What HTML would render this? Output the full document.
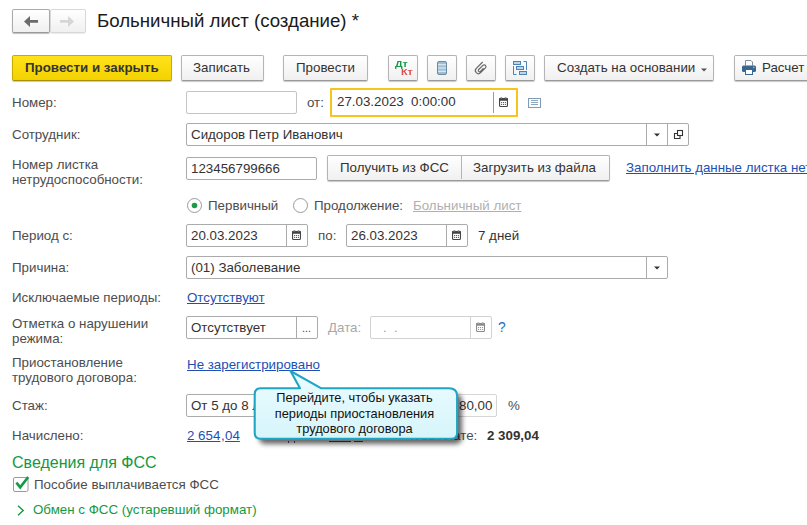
<!DOCTYPE html>
<html><head><meta charset="utf-8">
<style>
*{box-sizing:border-box;margin:0;padding:0}
html,body{width:807px;height:525px;overflow:hidden;background:#fff}
body{position:relative;font-family:"Liberation Sans",sans-serif;font-size:13.33px;line-height:15px;color:#4d4d4d}
div,span{position:absolute;white-space:nowrap}
.btn{border:1px solid #b4b4b4;border-bottom-color:#9a9a9a;border-radius:2px;background:linear-gradient(#ffffff,#f0f0f0);box-shadow:0 1px 1px rgba(0,0,0,.22)}
.bt{color:#333}
.inp{border:1px solid #ababab;border-radius:2px;background:#fff}
.v{color:#333}
.lnk{color:#1d4fb5;text-decoration:underline}
.sep{width:1px;background:#ababab}
svg{position:absolute}
</style></head><body>
<!-- nav -->
<div class="btn" style="left:12px;top:9px;width:38px;height:24px;border-color:#aaa;border-bottom-color:#999;box-shadow:0 1px 1px rgba(0,0,0,.25)"></div>
<div class="btn" style="left:50px;top:9px;width:36px;height:24px;border-color:#d8d8d8;box-shadow:0 1px 1px rgba(0,0,0,.08)"></div>
<svg style="left:24px;top:16px" width="14" height="11" viewBox="0 0 14 11"><path d="M0 5.5 L6 0 V4.1 H14 V6.8 H6 V11 Z" fill="#6b6b6b"/></svg>
<svg style="left:60px;top:16px" width="14" height="11" viewBox="0 0 14 11"><path d="M14 5.5 L8 0 V4.1 H0 V6.8 H8 V11 Z" fill="#d6d6d6"/></svg>
<div style="left:97px;top:13px;font-size:18.67px;color:#1a1a1a">Больничный лист (создание) *</div>

<!-- toolbar -->
<div class="btn" style="left:12px;top:55px;width:160px;height:26px;background:linear-gradient(#ffe21a,#f4d200);border-color:#c9ab00;border-bottom-color:#a88f00"></div>
<div style="left:25px;top:60px;font-weight:bold;color:#333">Провести и закрыть</div>
<div class="btn" style="left:181px;top:55px;width:83px;height:26px"></div>
<div class="bt" style="left:193px;top:60px">Записать</div>
<div class="btn" style="left:283px;top:55px;width:85px;height:26px"></div>
<div class="bt" style="left:296px;top:60px">Провести</div>

<div class="btn" style="left:388px;top:55px;width:30px;height:26px"></div>
<div style="left:395px;top:59px;font-size:9.5px;font-weight:bold;color:#17994a;line-height:10px;transform:scaleX(1.12);transform-origin:0 0">Дт</div>
<div style="left:400.5px;top:67px;font-size:9.5px;font-weight:bold;color:#e04a4e;line-height:10px;transform:scaleX(1.12);transform-origin:0 0">Кт</div>
<div class="btn" style="left:427px;top:55px;width:30px;height:26px"></div>
<svg style="left:437px;top:61px" width="10" height="14" viewBox="0 0 10 14"><rect x="0.5" y="0.5" width="9" height="13" rx="1.5" fill="#9fbed4" stroke="#6a8aa2"/><path d="M1 3.8H9M1 7H9M1 10.2H9" stroke="#eaf3f8" stroke-width="1.1"/></svg>
<div class="btn" style="left:466px;top:55px;width:30px;height:26px"></div>
<svg style="left:472px;top:59px" width="18" height="18" viewBox="-9 -9 18 18"><path transform="rotate(45) scale(0.9)" d="M-3.4 -6 V4 A3.4 3.4 0 0 0 3.4 4 V-3.6 A2 2 0 0 0 -0.6 -3.6 V3 A1.4 1.4 0 0 0 2.2 3 V-1.8" fill="none" stroke="#666" stroke-width="1.3"/></svg>
<div class="btn" style="left:505px;top:55px;width:30px;height:26px"></div>
<svg style="left:512px;top:60px" width="16" height="16" viewBox="0 0 16 16"><g fill="#bcd7ea" stroke="#4b83b5" stroke-width="1"><rect x="1.5" y="1.5" width="7" height="3"/><rect x="4.5" y="6.5" width="7" height="3"/><rect x="7.5" y="11.5" width="7" height="3"/></g><path d="M1.5 6V14.5H4.5M11.5 1.5H14.5V10" fill="none" stroke="#4b83b5"/></svg>

<div class="btn" style="left:544px;top:55px;width:170px;height:26px"></div>
<div class="bt" style="left:557px;top:60px">Создать на основании</div>
<svg style="left:701px;top:68px" width="6" height="4" viewBox="0 0 6 4"><path d="M0 0.5H6L3 3.5Z" fill="#555"/></svg>

<div class="btn" style="left:734px;top:55px;width:90px;height:26px"></div>
<svg style="left:742px;top:60px" width="15" height="15" viewBox="0 0 15 15"><path d="M3.5 5.5V0.5H9L10.5 2V5.5" fill="#fff" stroke="#7d8d9c"/><rect x="0" y="5.5" width="14" height="6.5" rx="1.5" fill="#3a6791"/><rect x="3.5" y="9.5" width="7" height="5" fill="#fff" stroke="#3a6791"/><rect x="11" y="6.8" width="1.5" height="1" fill="#b8c8d8"/></svg>
<div class="bt" style="left:762px;top:60px">Расчет</div>

<!-- Номер -->
<div style="left:12px;top:95px">Номер:</div>
<div class="inp" style="left:186px;top:91px;width:111px;height:23px;border-color:#c4c4c4"></div>
<div style="left:307px;top:95px">от:</div>
<div class="inp" style="left:330px;top:88px;width:188px;height:29px;border:2px solid #f6c51c;border-radius:1px"></div>
<div class="v" style="left:337px;top:94px">27.03.2023&nbsp; 0:00:00</div>
<div class="sep" style="left:493px;top:92px;height:21px;background:#9a9a9a"></div>
<svg style="left:499px;top:97px" width="9" height="10" viewBox="0 0 9 10"><rect x="0.55" y="1.55" width="7.9" height="7.9" rx="1" fill="#fff" stroke="#444" stroke-width="1.1"/><rect x="0" y="1" width="9" height="2.7" rx="0.8" fill="#444"/><circle cx="2.4" cy="1" r="0.7" fill="#fff" stroke="#444" stroke-width="0.6"/><circle cx="6.6" cy="1" r="0.7" fill="#fff" stroke="#444" stroke-width="0.6"/><g fill="#444"><circle cx="2.6" cy="5.6" r="0.62"/><circle cx="4.5" cy="5.6" r="0.62"/><circle cx="6.4" cy="5.6" r="0.62"/><circle cx="2.6" cy="7.5" r="0.62"/><circle cx="4.5" cy="7.5" r="0.62"/><circle cx="6.4" cy="7.5" r="0.62"/></g></svg>
<svg style="left:528px;top:98px" width="13" height="10" viewBox="0 0 13 10"><rect x="0.5" y="0.5" width="12" height="9" fill="#fbfcfd" stroke="#809bb4"/><path d="M3 2.5H10M3 4.5H10M3 6.5H10" stroke="#8ea6bc"/></svg>

<!-- Сотрудник -->
<div style="left:12px;top:127px">Сотрудник:</div>
<div class="inp" style="left:186px;top:123px;width:503px;height:23px"></div>
<div class="sep" style="left:646px;top:124px;height:21px"></div>
<div class="sep" style="left:667px;top:124px;height:21px"></div>
<div class="v" style="left:191px;top:127px">Сидоров Петр Иванович</div>
<svg style="left:654px;top:133px" width="6" height="4" viewBox="0 0 6 4"><path d="M0 0.5H6L3 3.5Z" fill="#333"/></svg>
<svg style="left:673px;top:129px" width="11" height="11" viewBox="0 0 11 11"><path d="M4 4.5H1.5V9.5H7V7" fill="none" stroke="#333" stroke-width="1.1"/><rect x="4.5" y="1.5" width="5" height="5" fill="none" stroke="#333" stroke-width="1.1"/></svg>

<!-- Номер листка -->
<div style="left:12px;top:157px">Номер листка<br>нетрудоспособности:</div>
<div class="inp" style="left:186px;top:157px;width:131px;height:23px"></div>
<div class="v" style="left:191px;top:161px">123456799666</div>
<div class="btn" style="left:327px;top:155px;width:283px;height:26px"></div>
<div class="sep" style="left:461px;top:156px;height:23px;background:#b4b4b4"></div>
<div class="bt" style="left:340px;top:160px">Получить из ФСС</div>
<div class="bt" style="left:473px;top:160px">Загрузить из файла</div>
<div class="lnk" style="left:626px;top:160px">Заполнить данные листка нетрудоспособности</div>

<!-- radio -->
<svg style="left:187px;top:198px" width="15" height="15" viewBox="0 0 15 15"><circle cx="7.5" cy="7.5" r="7" fill="#fff" stroke="#9a9a9a"/><circle cx="7.5" cy="7.5" r="2.8" fill="#1e9a46"/></svg>
<div style="left:208px;top:198px">Первичный</div>
<svg style="left:293px;top:198px" width="15" height="15" viewBox="0 0 15 15"><circle cx="7.5" cy="7.5" r="7" fill="#fff" stroke="#9a9a9a"/></svg>
<div style="left:314px;top:198px">Продолжение:</div>
<div style="left:413px;top:198px;color:#b0b0b0;text-decoration:underline">Больничный лист</div>

<!-- Период -->
<div style="left:12px;top:228px">Период с:</div>
<div class="inp" style="left:186px;top:224px;width:122px;height:23px"></div>
<div class="sep" style="left:286px;top:225px;height:21px"></div>
<div class="v" style="left:191px;top:228px">20.03.2023</div>
<svg style="left:292px;top:230px" width="9" height="10" viewBox="0 0 9 10"><rect x="0.55" y="1.55" width="7.9" height="7.9" rx="1" fill="#fff" stroke="#444" stroke-width="1.1"/><rect x="0" y="1" width="9" height="2.7" rx="0.8" fill="#444"/><circle cx="2.4" cy="1" r="0.7" fill="#fff" stroke="#444" stroke-width="0.6"/><circle cx="6.6" cy="1" r="0.7" fill="#fff" stroke="#444" stroke-width="0.6"/><g fill="#444"><circle cx="2.6" cy="5.6" r="0.62"/><circle cx="4.5" cy="5.6" r="0.62"/><circle cx="6.4" cy="5.6" r="0.62"/><circle cx="2.6" cy="7.5" r="0.62"/><circle cx="4.5" cy="7.5" r="0.62"/><circle cx="6.4" cy="7.5" r="0.62"/></g></svg>
<div style="left:318px;top:228px">по:</div>
<div class="inp" style="left:346px;top:224px;width:122px;height:23px"></div>
<div class="sep" style="left:446px;top:225px;height:21px"></div>
<div class="v" style="left:351px;top:228px">26.03.2023</div>
<svg style="left:452px;top:230px" width="9" height="10" viewBox="0 0 9 10"><rect x="0.55" y="1.55" width="7.9" height="7.9" rx="1" fill="#fff" stroke="#444" stroke-width="1.1"/><rect x="0" y="1" width="9" height="2.7" rx="0.8" fill="#444"/><circle cx="2.4" cy="1" r="0.7" fill="#fff" stroke="#444" stroke-width="0.6"/><circle cx="6.6" cy="1" r="0.7" fill="#fff" stroke="#444" stroke-width="0.6"/><g fill="#444"><circle cx="2.6" cy="5.6" r="0.62"/><circle cx="4.5" cy="5.6" r="0.62"/><circle cx="6.4" cy="5.6" r="0.62"/><circle cx="2.6" cy="7.5" r="0.62"/><circle cx="4.5" cy="7.5" r="0.62"/><circle cx="6.4" cy="7.5" r="0.62"/></g></svg>
<div class="v" style="left:478px;top:228px">7 дней</div>

<!-- Причина -->
<div style="left:12px;top:260px">Причина:</div>
<div class="inp" style="left:186px;top:256px;width:482px;height:23px"></div>
<div class="sep" style="left:646px;top:257px;height:21px"></div>
<div class="v" style="left:191px;top:260px">(01) Заболевание</div>
<svg style="left:654px;top:266px" width="6" height="4" viewBox="0 0 6 4"><path d="M0 0.5H6L3 3.5Z" fill="#333"/></svg>

<!-- Исключаемые -->
<div style="left:12px;top:290px">Исключаемые периоды:</div>
<div class="lnk" style="left:187px;top:290px">Отсутствуют</div>

<!-- Отметка -->
<div style="left:12px;top:316px">Отметка о нарушении<br>режима:</div>
<div class="inp" style="left:186px;top:316px;width:132px;height:23px"></div>
<div class="sep" style="left:296px;top:317px;height:21px"></div>
<div class="v" style="left:191px;top:320px">Отсутствует</div>
<div style="left:302px;top:321px;font-size:11px;color:#444">...</div>
<div style="left:328px;top:320px;color:#a8a8a8">Дата:</div>
<div class="inp" style="left:370px;top:316px;width:122px;height:23px;border-color:#d2d2d2"></div>
<div class="sep" style="left:470px;top:317px;height:21px;background:#d2d2d2"></div>
<div style="left:383px;top:320px;color:#e0906a">.&nbsp;&nbsp;.</div>
<svg style="left:476px;top:322px" width="9" height="10" viewBox="0 0 9 10"><rect x="0.55" y="1.55" width="7.9" height="7.9" rx="1" fill="#fff" stroke="#8a8a8a" stroke-width="1.1"/><rect x="0" y="1" width="9" height="2.7" rx="0.8" fill="#8a8a8a"/><circle cx="2.4" cy="1" r="0.7" fill="#fff" stroke="#8a8a8a" stroke-width="0.6"/><circle cx="6.6" cy="1" r="0.7" fill="#fff" stroke="#8a8a8a" stroke-width="0.6"/><g fill="#8a8a8a"><circle cx="2.6" cy="5.6" r="0.62"/><circle cx="4.5" cy="5.6" r="0.62"/><circle cx="6.4" cy="5.6" r="0.62"/><circle cx="2.6" cy="7.5" r="0.62"/><circle cx="4.5" cy="7.5" r="0.62"/><circle cx="6.4" cy="7.5" r="0.62"/></g></svg>
<div style="left:498px;top:320px;color:#1b6fc0;font-size:13.8px">?</div>

<!-- Приостановление -->
<div style="left:12px;top:355px">Приостановление<br>трудового договора:</div>
<div class="lnk" style="left:187px;top:357px">Не зарегистрировано</div>

<!-- Стаж -->
<div style="left:12px;top:398px">Стаж:</div>
<div class="inp" style="left:186px;top:394px;width:160px;height:23px"></div>
<div class="v" style="left:191px;top:398px">От 5 до 8 лет</div>
<div class="inp" style="left:420px;top:394px;width:77px;height:23px;border-color:#d6d6d6"></div>
<div class="v" style="left:459px;top:398px">80,00</div>
<div style="left:508px;top:398px">%</div>

<!-- Начислено -->
<div style="left:12px;top:428px">Начислено:</div>
<div class="lnk" style="left:187px;top:428px">2 654</div><div class="v" style="left:221px;top:428px;color:#1d4fb5">,</div><div class="lnk" style="left:225px;top:428px">04</div>
<div style="left:288px;top:441px;width:1px;height:2px;background:#6a4a80"></div><div style="left:294px;top:441px;width:1px;height:2px;background:#6a4a80"></div>
<div style="left:329px;top:441px;width:22px;height:1px;background:#1d4fb5"></div><div style="left:354px;top:441px;width:9px;height:1px;background:#1d4fb5"></div>
<div style="left:410px;top:428px">К выплате:</div>
<div class="v" style="left:487px;top:428px;font-weight:bold">2 309,04</div>

<!-- ФСС -->
<div style="left:12px;top:455px;font-size:16px;color:#14993f">Сведения для ФСС</div>
<svg style="left:12px;top:474px" width="18" height="18" viewBox="0 0 18 18"><rect x="1.5" y="3.5" width="14.5" height="14" rx="1.5" fill="#fff" stroke="#9a9a9a"/><path d="M4.4 8.6 L8.2 13.4 L16.2 3" fill="none" stroke="#13994a" stroke-width="2.6" stroke-linecap="butt"/></svg>
<div style="left:34px;top:477px">Пособие выплачивается ФСС</div>
<svg style="left:17px;top:505px" width="8" height="11" viewBox="0 0 8 11"><path d="M1 0.8 L6.2 5.5 L1 10.2" fill="none" stroke="#14993f" stroke-width="1.4"/></svg>
<div style="left:33px;top:502px;color:#14993f">Обмен с ФСС (устаревший формат)</div>

<!-- tooltip -->
<svg style="left:250px;top:368px" width="225" height="85" viewBox="0 0 225 85">
<defs><linearGradient id="tg" x1="0" y1="0" x2="0" y2="1"><stop offset="0" stop-color="#ebfcff"/><stop offset="1" stop-color="#d6f5fb"/></linearGradient>
<filter id="sh" x="-20%" y="-30%" width="140%" height="160%"><feGaussianBlur stdDeviation="2.6"/></filter></defs>
<rect x="9" y="26" width="203" height="50" rx="6" fill="rgba(0,0,0,.6)" filter="url(#sh)"/>
<path d="M11 20.3 H50 L40.5 3 L71.3 20.3 H199 Q207.1 20.3 207.1 28 V65 Q207.1 70.8 201.3 70.8 H10.5 Q4.7 70.8 4.7 65 V26.3 Q4.7 20.3 11 20.3 Z" fill="url(#tg)" stroke="#1ea6c4" stroke-width="2.1" stroke-linejoin="round"/>
</svg>
<div style="left:252px;top:390px;width:205px;text-align:center;font-size:12.8px;line-height:15.7px;color:#111">Перейдите, чтобы указать<br>периоды приостановления<br>трудового договора</div>

</body></html>
